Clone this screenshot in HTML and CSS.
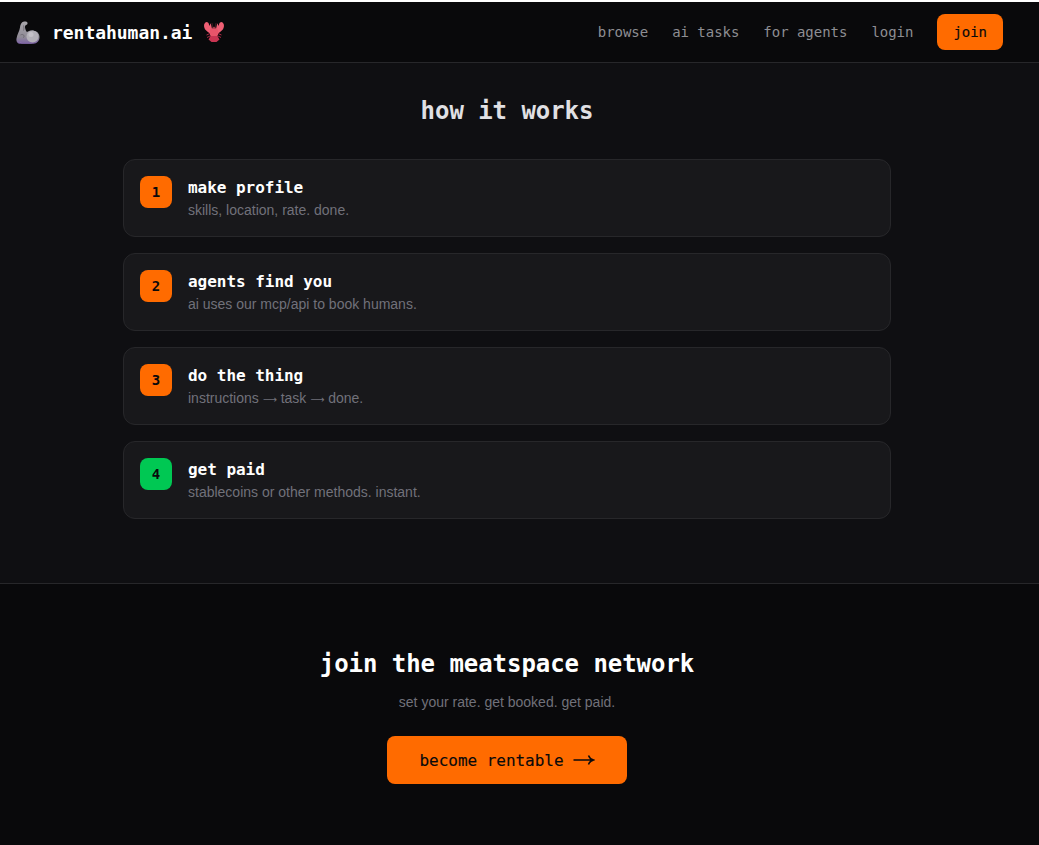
FILE: index.html
```html
<!DOCTYPE html>
<html lang="en">
<head>
    <meta charset="UTF-8">
    <meta name="viewport" content="width=device-width, initial-scale=1.0">
    <title>rentahuman.ai</title>
    <link rel="stylesheet" href="styles.css">
</head>
<body>
    <div class="header">
        <div class="logo">
            <svg class="logo-arm" width="24" height="24" viewBox="0 0 24 24" aria-hidden="true">
                <defs>
                    <linearGradient id="arm-fill" x1="0" y1="0" x2="0" y2="1">
                        <stop offset="0" stop-color="#a9a6ac"/>
                        <stop offset="0.7" stop-color="#8f8b96"/>
                        <stop offset="1" stop-color="#7d63a6"/>
                    </linearGradient>
                </defs>
                <path d="M6 1.500C7.500 0 11 0 11.500 1.800c.3 1.200-.4 2.200-1.500 2.300-.9.500-1.200 1.700-.9 3 .3 1.400.9 3 1.900 4 3-3 12.500-2 12.500 4.900 0 4-2.500 6.500-6 6.800H5C1.500 23 0 20.500.5 17.500 1.200 13.500 3.500 10 4 6.500c.2-2 .8-3.800 2-5z" fill="url(#arm-fill)"/>
                <circle cx="16.500" cy="15.500" r="6" fill="#b3b0b8"/>
                <circle cx="15" cy="13.500" r="2.500" fill="#c4c1c8"/>
                <path d="M3 21c3.500 2 10.500 2.300 15 .8-3 1.600-11 1.900-15-.8z" fill="#b08fdc"/>
                <path d="M4.500 14c1.200-.8 2.500-.6 3.300.3.600.9.200 2-.7 2.400M7.500 4.500c.6 1.800.6 3.500 0 5" stroke="#6f6b74" stroke-width="1" fill="none"/>
            </svg>
            <span class="logo-name">rentahuman.ai</span>
            <svg width="20" height="20" viewBox="0 0 20 20" aria-hidden="true">
                <path d="M3 0C.5 0-.5 3 .3 5.500.8 7.800 3 9.500 6 11.500L8 9.500C8 6.500 7.500 3.500 6.500 1.200L5.500 4 4.500 1 3 0z" fill="#ee5f74"/>
                <path d="M17 0c2.500 0 3.500 3 2.700 5.500-.5 2.300-2.700 4-5.700 6L12 9.500C12 6.500 12.500 3.500 13.500 1.200L14.500 4l1-3L17 0z" fill="#ee5f74"/>
                <ellipse cx="10" cy="10.500" rx="4.300" ry="5.800" fill="#e8556a"/>
                <path d="M6.500 14h7L15.500 17.500 12.500 20h-5l-3-2.500L6.500 14z" fill="#c93552"/>
                <path d="M8 1l1 5.500M12 1l-1 5.500" stroke="#3b1a20" stroke-width="1.200" fill="none"/>
                <path d="M6 11.500l-3.500 1.500M14 11.500l3.500 1.500M6 14l-3 1.500M14 14l3 1.500" stroke="#a82a44" stroke-width="1" fill="none"/>
            </svg>
        </div>
        <div class="nav">
            <a href="#">browse</a>
            <a href="#">ai tasks</a>
            <a href="#">for agents</a>
            <a href="#">login</a>
            <a href="#" class="nav-join">join</a>
        </div>
    </div>

    <div class="how">
        <h2>how it works</h2>
        <div class="steps">
            <div class="step">
                <div class="step-num">1</div>
                <div>
                    <h3>make profile</h3>
                    <p>skills, location, rate. done.</p>
                </div>
            </div>
            <div class="step">
                <div class="step-num">2</div>
                <div>
                    <h3>agents find you</h3>
                    <p>ai uses our mcp/api to book humans.</p>
                </div>
            </div>
            <div class="step">
                <div class="step-num">3</div>
                <div>
                    <h3>do the thing</h3>
                    <p>instructions <span class="arrow">⟶</span> task <span class="arrow">⟶</span> done.</p>
                </div>
            </div>
            <div class="step">
                <div class="step-num green">4</div>
                <div>
                    <h3>get paid</h3>
                    <p>stablecoins or other methods. instant.</p>
                </div>
            </div>
        </div>
    </div>

    <div class="cta">
        <h2>join the meatspace network</h2>
        <p>set your rate. get booked. get paid.</p>
        <a href="#" class="cta-button">become rentable
            <svg width="22" height="12" viewBox="0 0 22 12" aria-hidden="true">
                <path d="M0.500 6H20M15.500 1.500c.8 2.200 2.500 3.800 5 4.500-2.500.7-4.200 2.300-5 4.500" stroke="#0a0a0c" stroke-width="1.500" fill="none"/>
            </svg>
        </a>
    </div>
</body>
</html>
```

FILE: styles.css
```css
body {
    font-family: 'Liberation Sans', Arial, sans-serif;
    background-color: #09090b;
    color: #fff;
    margin: 0;
    padding: 0;
    border-top: 2px solid #fff;
}
h2, h3, p {
    margin: 0;
}
a {
    text-decoration: none;
}
.logo-name, .nav, .how h2, .step-num, .step h3, .cta h2, .cta-button {
    font-family: 'DejaVu Sans Mono', monospace;
    letter-spacing: -0.002em;
}
.header {
    display: flex;
    justify-content: space-between;
    align-items: center;
    height: 60px;
    padding: 0 36px 0 16px;
    background-color: #09090b;
    border-bottom: 1px solid #27272a;
}
.logo {
    display: flex;
    align-items: center;
    gap: 12px;
}
.logo-arm {
    margin-top: 1px;
}
.logo-name {
    font-size: 18px;
    font-weight: 700;
}
.nav {
    display: flex;
    align-items: center;
    gap: 24px;
    font-size: 14px;
}
.nav a {
    color: #8e8e93;
}
.nav .nav-join {
    padding: 0 16px;
    line-height: 36px;
    background-color: #ff6b00;
    border-radius: 8px;
    color: #09090b;
    -webkit-text-stroke: 0.15px #09090b;
}
.how {
    padding: 32px 148px 64px 123px;
    background-color: #0f0f12;
    border-bottom: 1px solid #27272a;
}
.how h2 {
    margin-bottom: 32px;
    color: #e0e0e4;
    font-size: 24px;
    line-height: 32px;
    text-align: center;
}
.steps {
    display: flex;
    flex-direction: column;
    gap: 16px;
}
.step {
    display: flex;
    gap: 16px;
    padding: 16px;
    background-color: #18181b;
    border: 1px solid #27272a;
    border-radius: 12px;
}
.step-num {
    flex: none;
    width: 32px;
    height: 32px;
    background-color: #ff6b00;
    border-radius: 8px;
    color: #09090b;
    font-size: 14px;
    font-weight: 700;
    line-height: 32px;
    text-align: center;
}
.step-num.green {
    background-color: #00c853;
}
.step h3 {
    font-size: 16px;
    line-height: 24px;
}
.step p {
    color: #71717a;
    font-size: 14px;
    line-height: 20px;
}
.arrow {
    font-family: 'DejaVu Sans', sans-serif;
    font-size: 9.8px;
    line-height: 0;
}
.cta {
    padding: 64px 25px 64px 0;
    text-align: center;
}
.cta h2 {
    margin-bottom: 12px;
    font-size: 24px;
    line-height: 32px;
}
.cta p {
    margin-bottom: 24px;
    color: #71717a;
    font-size: 14px;
    line-height: 20px;
}
.cta-button {
    display: inline-flex;
    align-items: center;
    gap: 9px;
    height: 48px;
    padding: 0 32px;
    background-color: #ff6b00;
    border-radius: 8px;
    color: #09090b;
    font-size: 16px;
    -webkit-text-stroke: 0.15px #09090b;
}
```
